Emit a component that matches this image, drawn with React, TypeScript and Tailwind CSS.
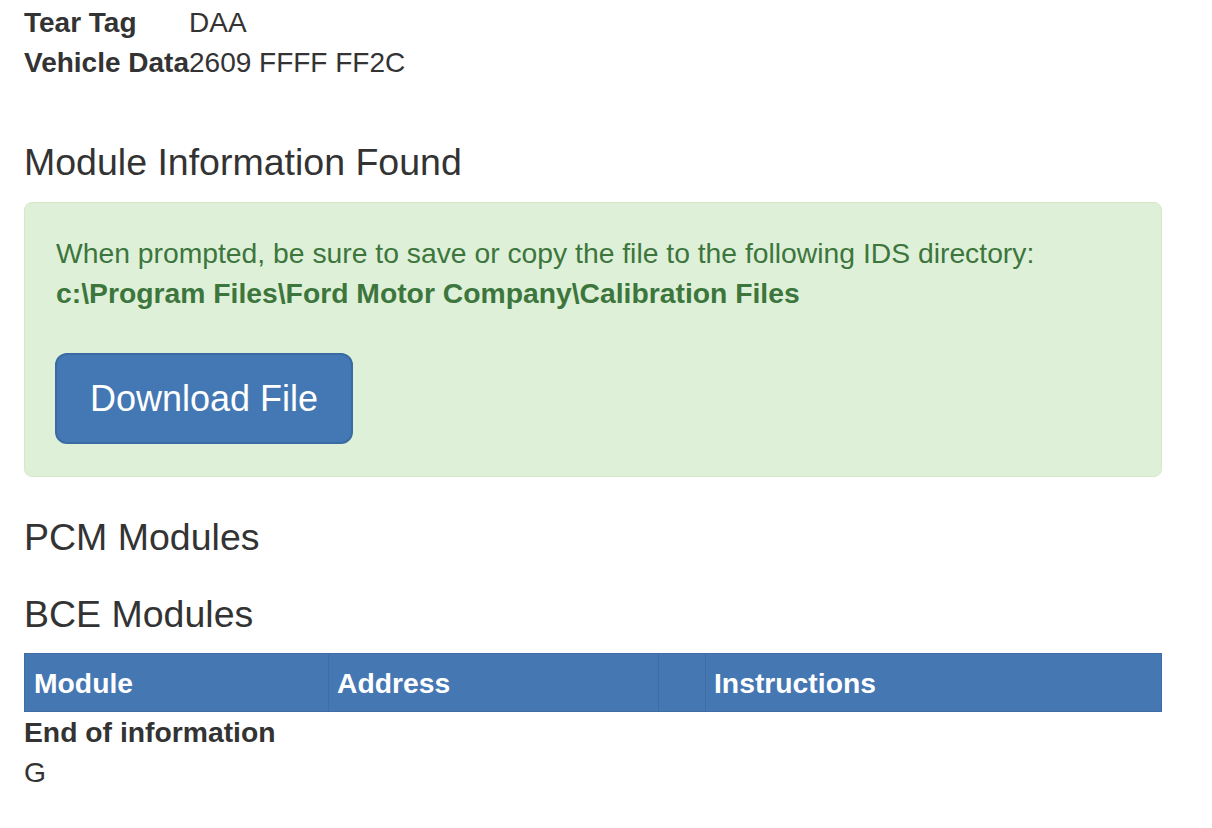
import React from "react";

const vehicleInfo = [
  { label: "Tear Tag", value: "DAA" },
  { label: "Vehicle Data", value: "2609 FFFF FF2C" },
];

export default function App() {
  return (
    <div
      className="min-h-screen bg-white text-[#333333] text-[28.3px] leading-[40px]"
      style={{ fontFamily: '"Liberation Sans", Arial, sans-serif' }}
    >
      <div className="w-[1138px] ml-[24px] pt-[3px] flex flex-col">
        {/* Vehicle details */}
        <div className="grid grid-cols-[auto_1fr] mb-[39px]">
          {vehicleInfo.map((row) => (
            <React.Fragment key={row.label}>
              <div className="font-bold text-[28px]">{row.label}</div>
              <div className="text-[28px]">{row.value}</div>
            </React.Fragment>
          ))}
        </div>

        <h4 className="text-[37.5px] leading-[40px] font-medium mt-[20px] mb-[20px]">
          Module Information Found
        </h4>

        {/* Success alert */}
        <div className="bg-[#dff0d8] border border-[#d6e9c6] rounded-[8px] text-[#3c763d] px-[31px] pt-[30px] pb-[32px] mb-[40px]">
          <p className="mb-[40px]">
            When prompted, be sure to save or copy the file to the following IDS directory:
            <br />
            <strong>c:\Program Files\Ford Motor Company\Calibration Files</strong>
          </p>
          <button className="block whitespace-nowrap -ml-[1px] bg-[#4378b4] border-2 border-[#3a6aa3] rounded-[12px] text-white text-[36px] leading-[48px] h-[91px] px-[33px]">
            Download File
          </button>
        </div>

        <h4 className="text-[37.5px] leading-[40px] font-medium mb-[20px]">
          PCM Modules
        </h4>
        <h4 className="text-[37.5px] leading-[40px] font-medium mt-[17px] mb-[19px]">
          BCE Modules
        </h4>

        {/* Module table */}
        <table className="w-full border-collapse">
          <thead>
            <tr className="bg-[#4577b2] text-white h-[58px]">
              <th className="w-[304px] text-left font-bold px-[9px] border border-[#3f6da3]">Module</th>
              <th className="w-[330px] text-left font-bold px-[8px] border border-[#3f6da3]">Address</th>
              <th className="w-[47px] border border-[#3f6da3]"></th>
              <th className="text-left font-bold px-[8px] border border-[#3f6da3]">Instructions</th>
            </tr>
          </thead>
        </table>
        <div className="font-bold">End of information</div>
        <div>G</div>
      </div>
    </div>
  );
}
